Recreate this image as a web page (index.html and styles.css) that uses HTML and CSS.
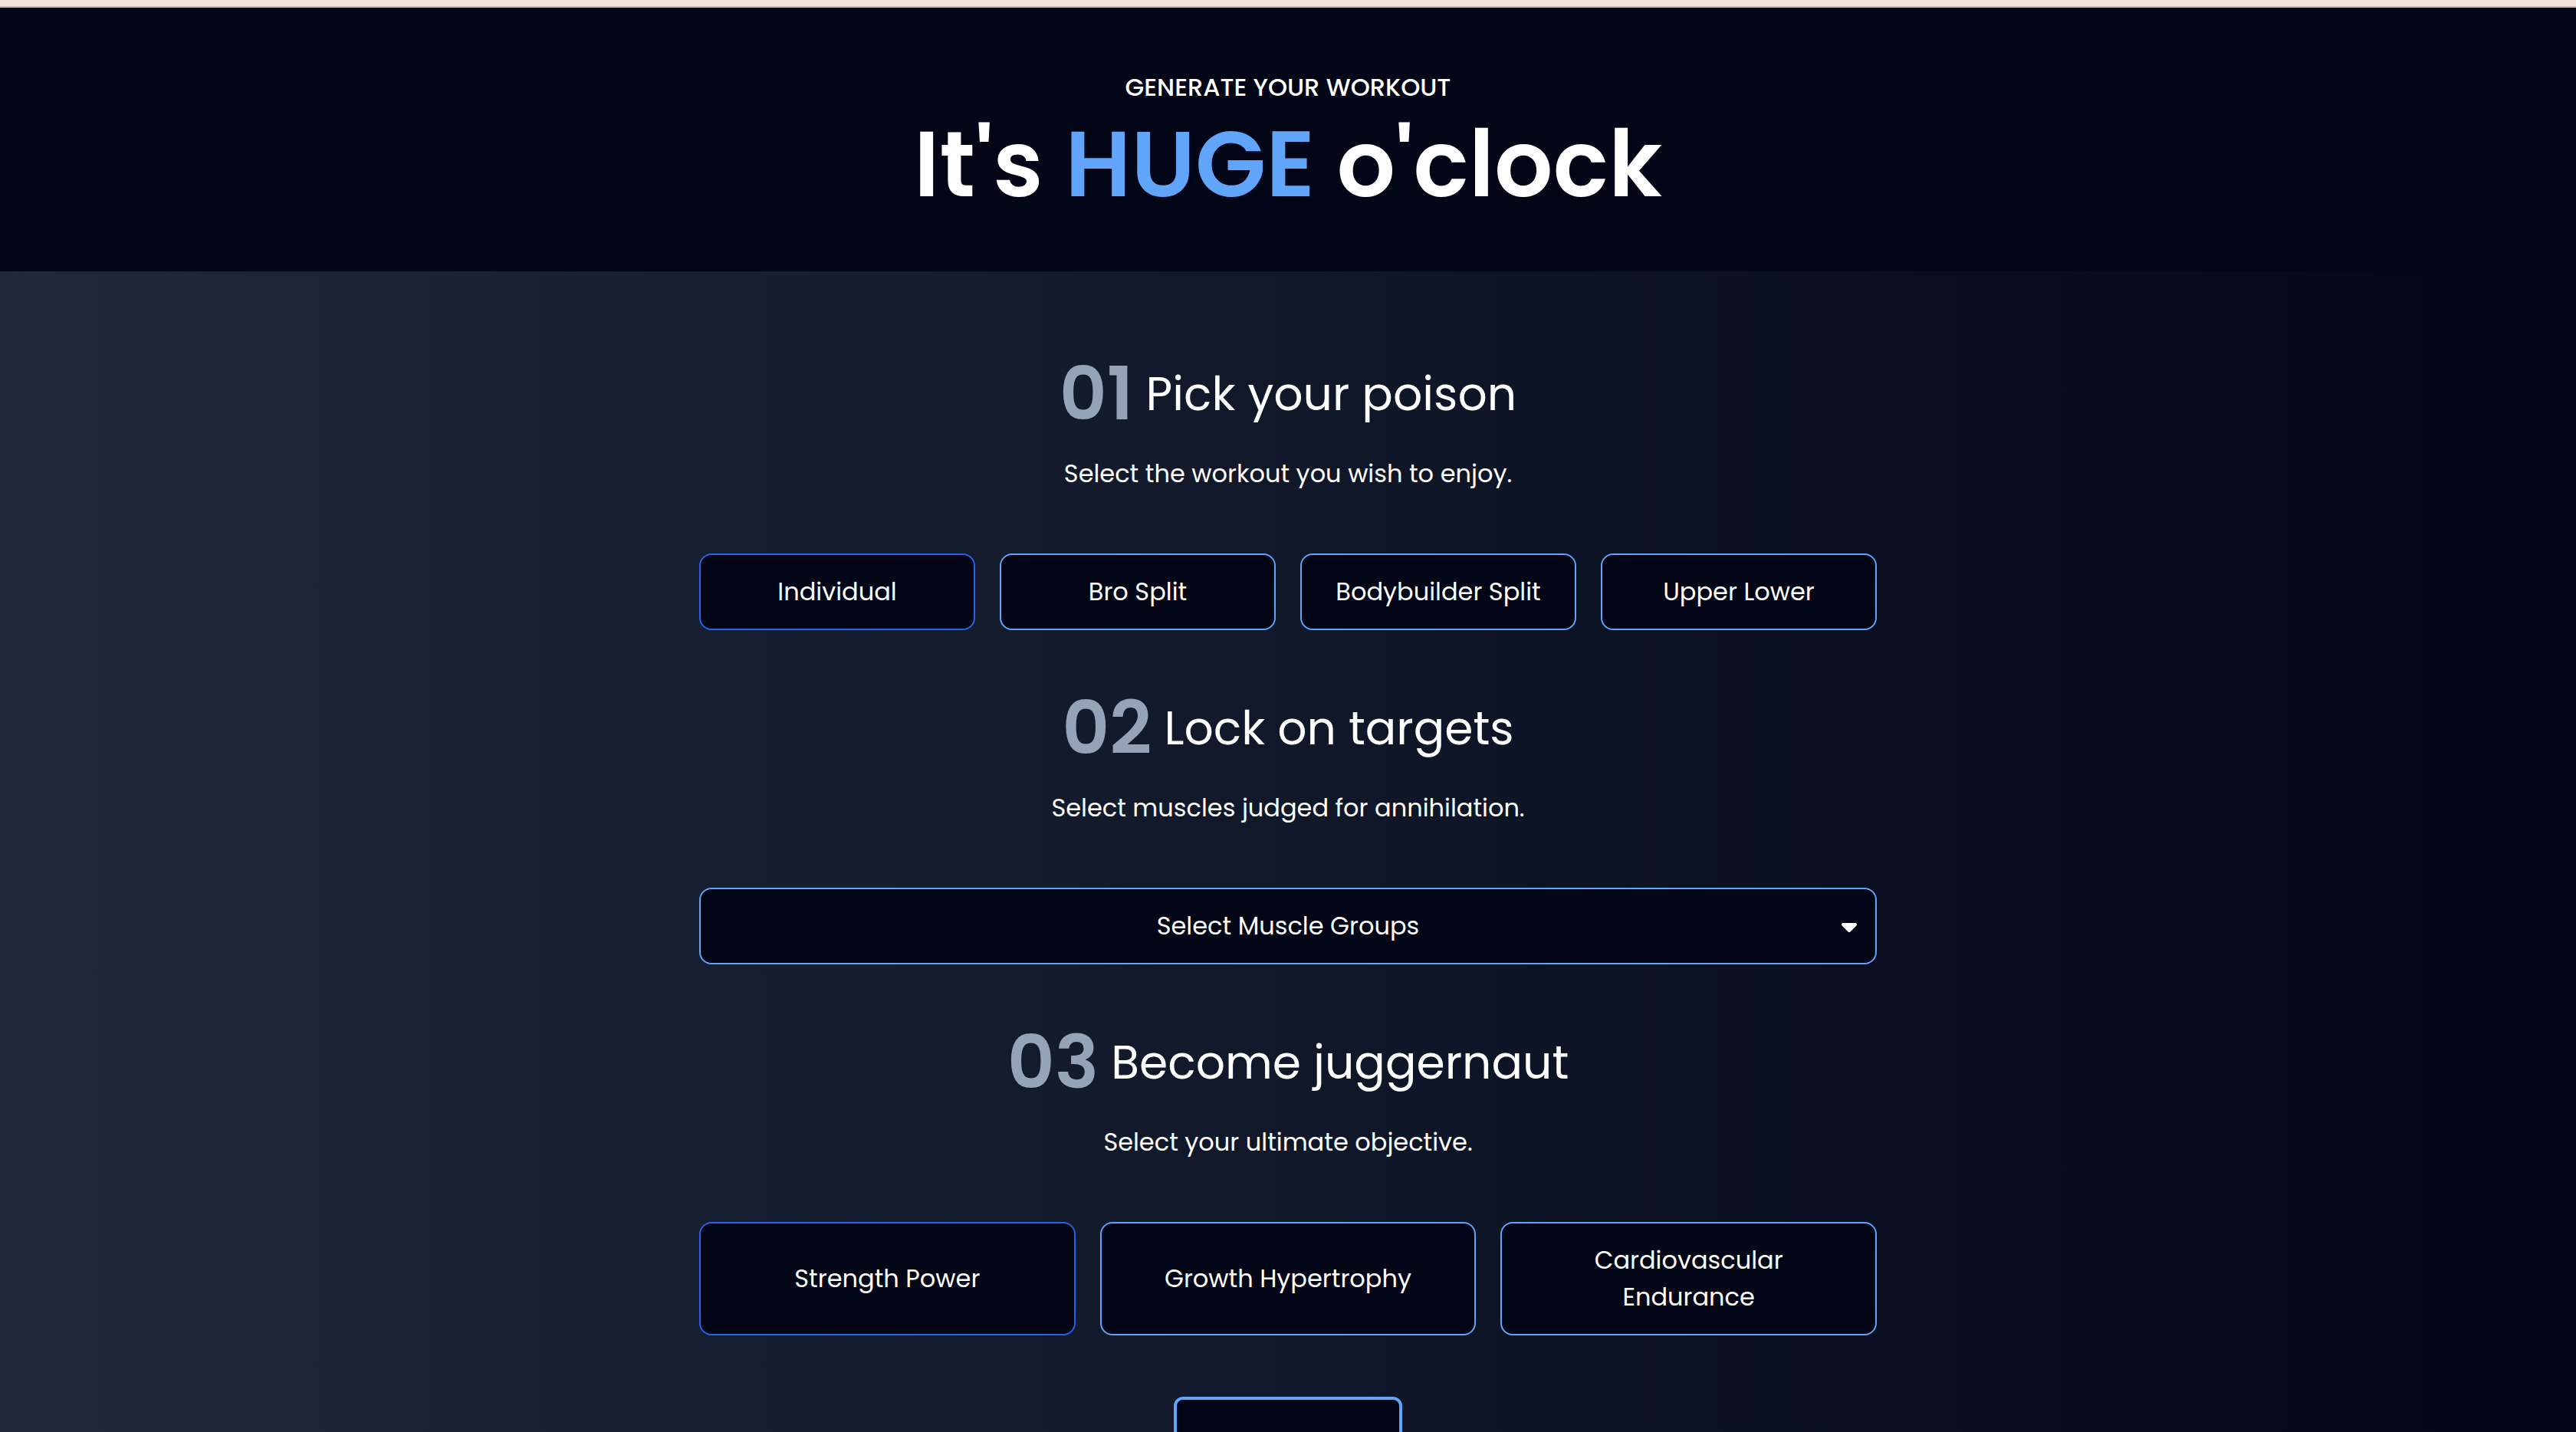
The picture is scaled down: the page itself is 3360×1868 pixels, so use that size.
FILE: index.html
```html
<!DOCTYPE html>
<html lang="en">
<head>
<meta charset="utf-8">
<title>Generate your workout</title>
<link rel="stylesheet" href="styles.css">
</head>
<body>
<div class="top-strip"></div>
<section class="generator">
  <div class="hero">
    <p class="eyebrow">Generate your workout</p>
    <h2 class="title">It's <span class="accent">Huge</span> o'clock</h2>
  </div>
  <div class="content">
    <div class="step">
      <div class="step-head">
        <p class="step-index">01</p>
        <h4 class="step-title">Pick your poison</h4>
      </div>
      <p class="step-desc">Select the workout you wish to enjoy.</p>
    </div>
    <div class="choices four">
      <button class="choice active">Individual</button>
      <button class="choice">Bro Split</button>
      <button class="choice">Bodybuilder Split</button>
      <button class="choice">Upper Lower</button>
    </div>

    <div class="step">
      <div class="step-head">
        <p class="step-index">02</p>
        <h4 class="step-title">Lock on targets</h4>
      </div>
      <p class="step-desc">Select muscles judged for annihilation.</p>
    </div>
    <div class="dropdown">
      <button class="dropdown-btn">
        <span>Select Muscle Groups</span>
        <svg class="caret" viewBox="0 0 320 512" aria-hidden="true"><path d="M137.4 374.6c12.5 12.5 32.8 12.5 45.3 0l128-128c9.2-9.2 11.9-22.9 6.9-34.9s-16.6-19.8-29.6-19.8L32 192c-12.9 0-24.6 7.8-29.6 19.8s-2.2 25.7 6.9 34.9l128 128z" fill="#ffffff"/></svg>
      </button>
    </div>

    <div class="step">
      <div class="step-head">
        <p class="step-index">03</p>
        <h4 class="step-title">Become juggernaut</h4>
      </div>
      <p class="step-desc">Select your ultimate objective.</p>
    </div>
    <div class="choices three">
      <button class="choice active">Strength Power</button>
      <button class="choice">Growth Hypertrophy</button>
      <button class="choice">Cardiovascular Endurance</button>
    </div>

    <button class="formulate">Formulate</button>
  </div>
</section>
</body>
</html>
```

FILE: styles.css
```css
html, body {
  margin: 0;
  padding: 0;
}

body {
  min-height: 100vh;
  background: linear-gradient(to right, #1e293b, #020617);
  color: #ffffff;
  font-family: "Poppins", Inter, "Open Sans", sans-serif;
  font-size: 32px;
  line-height: 48px;
}

.top-strip {
  height: 8px;
  background: #f3e2dc;
  border-bottom: 2px solid #c9b8b3;
}

.generator {
  display: flex;
  flex-direction: column;
  gap: 80px;
  min-height: 1858px;
}

.hero {
  background: #020617;
  padding: 80px 32px;
  display: flex;
  flex-direction: column;
  align-items: center;
  justify-content: center;
  gap: 16px;
}

.eyebrow {
  margin: 0;
  text-transform: uppercase;
  font-weight: 500;
}

.title {
  margin: 0;
  font-size: 120px;
  line-height: 1;
  font-weight: 600;
}

.accent {
  text-transform: uppercase;
  color: #60a5fa;
}

.content {
  box-sizing: border-box;
  width: 100%;
  max-width: 1600px;
  margin: 0 auto;
  padding: 32px;
  display: flex;
  flex-direction: column;
  gap: 80px;
}

.step {
  display: flex;
  flex-direction: column;
  gap: 32px;
}

.step-head {
  display: flex;
  align-items: center;
  justify-content: center;
  gap: 16px;
}

.step-index {
  margin: 0;
  font-size: 96px;
  line-height: 1;
  font-weight: 600;
  color: #94a3b8;
}

.step-title {
  margin: 0;
  font-size: 60px;
  line-height: 72px;
  font-weight: 400;
}

.step-desc {
  margin: 0 auto;
}

.choices {
  display: grid;
  gap: 32px;
}

.choices.four {
  grid-template-columns: repeat(4, 1fr);
}

.choices.three {
  grid-template-columns: repeat(3, 1fr);
}

.choice {
  font: inherit;
  color: #ffffff;
  background: #020617;
  border: 2px solid #60a5fa;
  border-radius: 16px;
  padding: 24px 32px;
  text-align: center;
}

.choice.active {
  border-color: #2563eb;
}

.dropdown {
  display: flex;
  flex-direction: column;
  background: #020617;
  border: 2px solid #60a5fa;
  border-radius: 16px;
}

.dropdown-btn {
  position: relative;
  font: inherit;
  color: #ffffff;
  background: transparent;
  border: 0;
  padding: 24px;
  display: flex;
  align-items: center;
  justify-content: center;
}

.caret {
  position: absolute;
  right: 24px;
  top: 50%;
  transform: translateY(-50%);
  width: 20px;
  height: 32px;
}

.formulate {
  font: inherit;
  color: #ffffff;
  background: #020617;
  margin: 0 auto;
  padding: 32px 64px;
  border: 4px solid #60a5fa;
  border-radius: 12px;
}
```
